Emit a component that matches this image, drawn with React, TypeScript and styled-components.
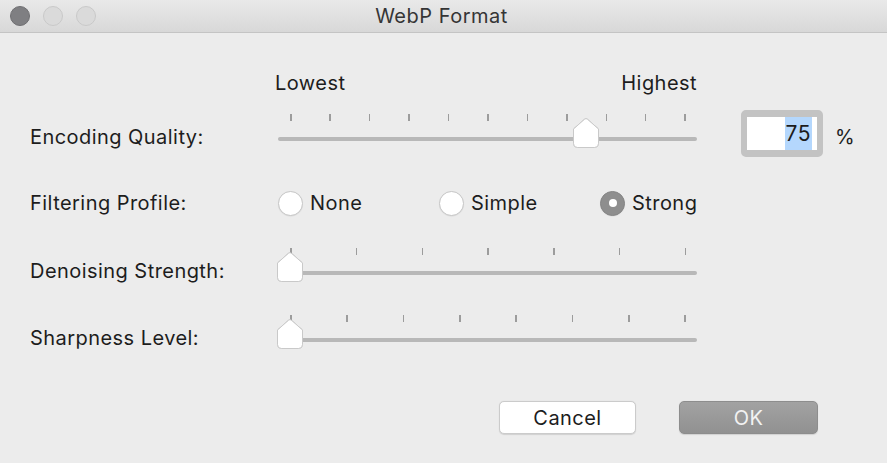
import React from 'react';
import styled, { createGlobalStyle } from 'styled-components';

const GlobalStyle = createGlobalStyle`
  html, body {
    margin: 0;
    padding: 0;
    background: #ececec;
  }
  body {
    font-family: Inter, "Liberation Sans", Arial, sans-serif;
    color: #1d1d1d;
  }
`;

const Window = styled.div`
  width: 887px;
  height: 463px;
  background: #ececec;
  overflow: hidden;
`;

const TitleBar = styled.div`
  height: 32px;
  border-bottom: 1px solid #c4c4c4;
  background: linear-gradient(#e9e9e9, #d8d8d8);
  display: grid;
  grid-template-columns: 1fr auto 1fr;
  align-items: center;
`;

const Lights = styled.div`
  display: flex;
  gap: 13px;
  padding-left: 10px;
`;

const Light = styled.span<{ $on?: boolean }>`
  width: 20px;
  height: 20px;
  border-radius: 50%;
  box-sizing: border-box;
  background: ${p => (p.$on ? '#7f7f82' : '#dadada')};
  border: 1px solid ${p => (p.$on ? '#6f6f72' : '#c9c9c9')};
`;

const Title = styled.div`
  font-size: 20px;
  color: #353535;
  letter-spacing: 0.5px;
  padding-bottom: 1px;
  margin-left: -4px;
`;

const Body = styled.div`
  padding-left: 30px;
`;

const Row = styled.div<{ $top: number }>`
  display: grid;
  grid-template-columns: 248px 419px auto;
  margin-top: ${p => p.$top}px;
`;

const SliderGrid = styled(Row)`
  grid-template-rows: 15px 20px;
`;

const Label = styled.div`
  font-size: 20px;
  line-height: 22px;
  color: #1d1d1d;
  align-self: center;
  letter-spacing: 0.45px;
`;

const RowLabel = styled(Label)`
  grid-column: 1;
  grid-row: 2;
  margin-top: -5px;
`;

const ScaleLabels = styled.div`
  grid-column: 2;
  display: flex;
  justify-content: space-between;
  margin-left: -3px;
  font-size: 20px;
  line-height: 22px;
  letter-spacing: 0.45px;
`;

const Ticks = styled.div`
  grid-column: 2;
  grid-row: 1;
  display: flex;
  justify-content: space-between;
  padding: 0 11px 0 12px;
`;

const Tick = styled.span`
  width: 1.5px;
  height: 7px;
  background: #9c9c9c;
`;

const Track = styled.div`
  grid-column: 2;
  grid-row: 2;
  position: relative;
  display: flex;
  align-items: center;
`;

const Rail = styled.div`
  width: 100%;
  height: 4px;
  border-radius: 2px;
  background: #b8b8b8;
`;

const ThumbWrap = styled.div`
  position: absolute;
  top: -11px;
  width: 26px;
  height: 30px;
  filter: drop-shadow(0 0.5px 0.5px rgba(0, 0, 0, 0.18));
`;

const FieldArea = styled.div`
  grid-column: 3;
  grid-row: 1 / 3;
  align-self: start;
  margin-top: -4px;
  margin-left: 44px;
  display: flex;
  align-items: center;
  gap: 12px;
`;

const Field = styled.div`
  box-sizing: border-box;
  width: 82px;
  height: 47px;
  border-style: solid;
  border-color: #c3c3c3;
  border-width: 7px 6px;
  border-radius: 5px;
  background: #fff;
  display: flex;
  justify-content: flex-end;
  padding-right: 5px;
`;

const Selected = styled.span`
  display: flex;
  align-items: center;
  background: #b4d7fd;
  padding: 0 1px;
  font-size: 21px;
  color: #1c1c1c;
  letter-spacing: 0.5px;
`;

const Unit = styled.span`
  font-size: 20px;
  color: #1d1d1d;
  margin-top: 6px;
`;

const RadioRow = styled(Row)`
  height: 30px;
  align-items: center;
`;

const Options = styled.div`
  grid-column: 2 / 4;
  display: flex;
`;

const Option = styled.label`
  display: flex;
  align-items: center;
  gap: 7px;
  width: 161px;
  font-size: 20px;
  color: #1d1d1d;
  letter-spacing: 0.45px;
`;

const Radio = styled.span<{ $checked?: boolean }>`
  box-sizing: border-box;
  width: 25px;
  height: 25px;
  border-radius: 50%;
  display: flex;
  align-items: center;
  justify-content: center;
  background: ${p => (p.$checked ? '#8e8e8e' : '#fff')};
  border: 1px solid ${p => (p.$checked ? '#858585' : '#c6c6c6')};
  box-shadow: 0 0.5px 1px rgba(0, 0, 0, 0.08);
  &::after {
    content: '';
    width: 8px;
    height: 8px;
    border-radius: 50%;
    background: #fff;
    display: ${p => (p.$checked ? 'block' : 'none')};
  }
`;

const Buttons = styled.div`
  display: flex;
  justify-content: flex-end;
  gap: 43px;
  padding-right: 69px;
  margin-top: 51px;
`;

const Button = styled.button<{ $primary?: boolean }>`
  box-sizing: border-box;
  width: ${p => (p.$primary ? 139 : 137)}px;
  height: 33px;
  border-radius: 5px;
  font-family: inherit;
  font-size: 20px;
  letter-spacing: 0.45px;
  padding: 0;
  color: ${p => (p.$primary ? '#f2f2f2' : '#1d1d1d')};
  background: ${p => (p.$primary ? 'linear-gradient(#a2a2a2, #919191)' : '#fff')};
  border: 1px solid ${p => (p.$primary ? '#8d8d8d' : '#cbcbcb')};
  box-shadow: 0 0.5px 1px rgba(0, 0, 0, 0.12);
`;

function Thumb({ pct }: { pct: number }) {
  return (
    <ThumbWrap style={{ left: `calc(${pct} * (100% - 24px) - 1px)` }}>
      <svg width="26" height="30" viewBox="0 0 26 30">
        <path
          d="M11.6 1.2 Q13 0 14.4 1.2 L25.5 11 V25.5 Q25.5 29.5 21.5 29.5 H4.5 Q0.5 29.5 0.5 25.5 V11 Z"
          fill="#fff"
          stroke="#c9c9c9"
          strokeWidth="1"
        />
      </svg>
    </ThumbWrap>
  );
}

function SliderRow({ label, ticks, pct, top, children }: {
  label: string; ticks: number; pct: number; top: number; children?: React.ReactNode;
}) {
  return (
    <SliderGrid $top={top}>
      <RowLabel>{label}</RowLabel>
      <Ticks>
        {Array.from({ length: ticks }).map((_, i) => <Tick key={i} />)}
      </Ticks>
      <Track>
        <Rail />
        <Thumb pct={pct} />
      </Track>
      {children}
    </SliderGrid>
  );
}

const profiles = [
  { name: 'None', checked: false },
  { name: 'Simple', checked: false },
  { name: 'Strong', checked: true },
];

export default function App() {
  return (
    <Window>
      <GlobalStyle />
      <TitleBar>
        <Lights>
          <Light $on />
          <Light />
          <Light />
        </Lights>
        <Title>WebP Format</Title>
        <span />
      </TitleBar>
      <Body>
        <Row $top={39}>
          <ScaleLabels>
            <span>Lowest</span>
            <span>Highest</span>
          </ScaleLabels>
        </Row>
        <SliderRow label="Encoding Quality:" ticks={11} pct={0.75} top={20}>
          <FieldArea>
            <Field>
              <Selected>75</Selected>
            </Field>
            <Unit>%</Unit>
          </FieldArea>
        </SliderRow>
        <RadioRow $top={39}>
          <Label>Filtering Profile:</Label>
          <Options>
            {profiles.map(p => (
              <Option key={p.name}>
                <Radio $checked={p.checked} />
                {p.name}
              </Option>
            ))}
          </Options>
        </RadioRow>
        <SliderRow label="Denoising Strength:" ticks={7} pct={0} top={30} />
        <SliderRow label="Sharpness Level:" ticks={8} pct={0} top={32} />
      </Body>
      <Buttons>
        <Button>Cancel</Button>
        <Button $primary>OK</Button>
      </Buttons>
    </Window>
  );
}
